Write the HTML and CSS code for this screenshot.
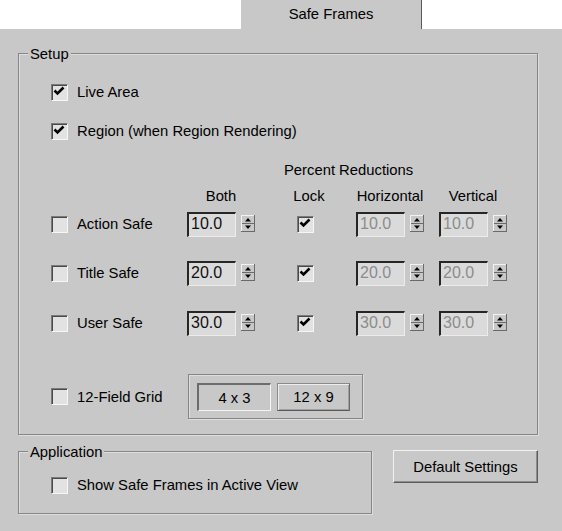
FILE: index.html
```html
<!DOCTYPE html>
<html>
<head>
<meta charset="utf-8">
<title>Safe Frames</title>
<link rel="stylesheet" href="styles.css">
</head>
<body>
<div class="tabbar">
  <div class="tab">Safe Frames</div>
</div>
<div class="panel">
  <div class="group setup">
    <span class="group-title">Setup</span>

    <div class="check row-live">
      <span class="box"><svg viewBox="0 0 17 17" width="17" height="17"><path d="M3.5 7.5 L6.5 10.5 L12.5 4.5" fill="none" stroke="#000" stroke-width="2.6"/></svg></span>
      <span>Live Area</span>
    </div>
    <div class="check row-region">
      <span class="box"><svg viewBox="0 0 17 17" width="17" height="17"><path d="M3.5 7.5 L6.5 10.5 L12.5 4.5" fill="none" stroke="#000" stroke-width="2.6"/></svg></span>
      <span>Region (when Region Rendering)</span>
    </div>

    <div class="pct">Percent Reductions</div>

    <div class="trow heads">
      <span></span>
      <span class="head">Both</span>
      <span class="head head-lock">Lock</span>
      <span class="head">Horizontal</span>
      <span class="head">Vertical</span>
    </div>

    <div class="trow data first">
      <div class="check"><span class="box"></span><span>Action Safe</span></div>
      <div class="spin"><span class="edit">10.0</span><svg class="arrows" viewBox="0 0 14 17" width="14" height="17"><rect x="0" y="0" width="14" height="17" fill="#c8c8c8"/><path d="M0 0.5 H13.5 M0.5 0 V17" stroke="#f2f2f2"/><path d="M13.5 0 V17 M0 16.5 H14" stroke="#6a6a6a"/><path d="M1 8.5 H13" stroke="#6a6a6a"/><path d="M4 6.5 H10 L7 3 Z" fill="#000"/><path d="M4 10.5 H10 L7 14 Z" fill="#000"/></svg></div>
      <span class="box lock"><svg viewBox="0 0 17 17" width="17" height="17"><path d="M3.5 7.5 L6.5 10.5 L12.5 4.5" fill="none" stroke="#000" stroke-width="2.6"/></svg></span>
      <div class="spin"><span class="edit disabled">10.0</span><svg class="arrows" viewBox="0 0 14 17" width="14" height="17"><rect x="0" y="0" width="14" height="17" fill="#c8c8c8"/><path d="M0 0.5 H13.5 M0.5 0 V17" stroke="#f2f2f2"/><path d="M13.5 0 V17 M0 16.5 H14" stroke="#6a6a6a"/><path d="M1 8.5 H13" stroke="#6a6a6a"/><path d="M4 6.5 H10 L7 3 Z" fill="#000"/><path d="M4 10.5 H10 L7 14 Z" fill="#000"/></svg></div>
      <div class="spin"><span class="edit disabled">10.0</span><svg class="arrows" viewBox="0 0 14 17" width="14" height="17"><rect x="0" y="0" width="14" height="17" fill="#c8c8c8"/><path d="M0 0.5 H13.5 M0.5 0 V17" stroke="#f2f2f2"/><path d="M13.5 0 V17 M0 16.5 H14" stroke="#6a6a6a"/><path d="M1 8.5 H13" stroke="#6a6a6a"/><path d="M4 6.5 H10 L7 3 Z" fill="#000"/><path d="M4 10.5 H10 L7 14 Z" fill="#000"/></svg></div>
    </div>

    <div class="trow data second">
      <div class="check"><span class="box"></span><span>Title Safe</span></div>
      <div class="spin"><span class="edit">20.0</span><svg class="arrows" viewBox="0 0 14 17" width="14" height="17"><rect x="0" y="0" width="14" height="17" fill="#c8c8c8"/><path d="M0 0.5 H13.5 M0.5 0 V17" stroke="#f2f2f2"/><path d="M13.5 0 V17 M0 16.5 H14" stroke="#6a6a6a"/><path d="M1 8.5 H13" stroke="#6a6a6a"/><path d="M4 6.5 H10 L7 3 Z" fill="#000"/><path d="M4 10.5 H10 L7 14 Z" fill="#000"/></svg></div>
      <span class="box lock"><svg viewBox="0 0 17 17" width="17" height="17"><path d="M3.5 7.5 L6.5 10.5 L12.5 4.5" fill="none" stroke="#000" stroke-width="2.6"/></svg></span>
      <div class="spin"><span class="edit disabled">20.0</span><svg class="arrows" viewBox="0 0 14 17" width="14" height="17"><rect x="0" y="0" width="14" height="17" fill="#c8c8c8"/><path d="M0 0.5 H13.5 M0.5 0 V17" stroke="#f2f2f2"/><path d="M13.5 0 V17 M0 16.5 H14" stroke="#6a6a6a"/><path d="M1 8.5 H13" stroke="#6a6a6a"/><path d="M4 6.5 H10 L7 3 Z" fill="#000"/><path d="M4 10.5 H10 L7 14 Z" fill="#000"/></svg></div>
      <div class="spin"><span class="edit disabled">20.0</span><svg class="arrows" viewBox="0 0 14 17" width="14" height="17"><rect x="0" y="0" width="14" height="17" fill="#c8c8c8"/><path d="M0 0.5 H13.5 M0.5 0 V17" stroke="#f2f2f2"/><path d="M13.5 0 V17 M0 16.5 H14" stroke="#6a6a6a"/><path d="M1 8.5 H13" stroke="#6a6a6a"/><path d="M4 6.5 H10 L7 3 Z" fill="#000"/><path d="M4 10.5 H10 L7 14 Z" fill="#000"/></svg></div>
    </div>

    <div class="trow data third">
      <div class="check"><span class="box"></span><span>User Safe</span></div>
      <div class="spin"><span class="edit">30.0</span><svg class="arrows" viewBox="0 0 14 17" width="14" height="17"><rect x="0" y="0" width="14" height="17" fill="#c8c8c8"/><path d="M0 0.5 H13.5 M0.5 0 V17" stroke="#f2f2f2"/><path d="M13.5 0 V17 M0 16.5 H14" stroke="#6a6a6a"/><path d="M1 8.5 H13" stroke="#6a6a6a"/><path d="M4 6.5 H10 L7 3 Z" fill="#000"/><path d="M4 10.5 H10 L7 14 Z" fill="#000"/></svg></div>
      <span class="box lock"><svg viewBox="0 0 17 17" width="17" height="17"><path d="M3.5 7.5 L6.5 10.5 L12.5 4.5" fill="none" stroke="#000" stroke-width="2.6"/></svg></span>
      <div class="spin"><span class="edit disabled">30.0</span><svg class="arrows" viewBox="0 0 14 17" width="14" height="17"><rect x="0" y="0" width="14" height="17" fill="#c8c8c8"/><path d="M0 0.5 H13.5 M0.5 0 V17" stroke="#f2f2f2"/><path d="M13.5 0 V17 M0 16.5 H14" stroke="#6a6a6a"/><path d="M1 8.5 H13" stroke="#6a6a6a"/><path d="M4 6.5 H10 L7 3 Z" fill="#000"/><path d="M4 10.5 H10 L7 14 Z" fill="#000"/></svg></div>
      <div class="spin"><span class="edit disabled">30.0</span><svg class="arrows" viewBox="0 0 14 17" width="14" height="17"><rect x="0" y="0" width="14" height="17" fill="#c8c8c8"/><path d="M0 0.5 H13.5 M0.5 0 V17" stroke="#f2f2f2"/><path d="M13.5 0 V17 M0 16.5 H14" stroke="#6a6a6a"/><path d="M1 8.5 H13" stroke="#6a6a6a"/><path d="M4 6.5 H10 L7 3 Z" fill="#000"/><path d="M4 10.5 H10 L7 14 Z" fill="#000"/></svg></div>
    </div>

    <div class="grid-row">
      <div class="check grid-check"><span class="box"></span><span>12-Field Grid</span></div>
      <div class="seg">
        <button class="seg-btn pressed">4 x 3</button>
        <button class="seg-btn raised">12 x 9</button>
      </div>
    </div>
  </div>

  <div class="bottom">
    <div class="group app">
      <span class="group-title">Application</span>
      <div class="check"><span class="box"></span><span>Show Safe Frames in Active View</span></div>
    </div>
    <button class="btn-default">Default Settings</button>
  </div>
</div>
</body>
</html>
```

FILE: styles.css
```css
html, body {
  margin: 0;
  padding: 0;
}

body {
  width: 562px;
  height: 531px;
  overflow: hidden;
  background: #ffffff;
  font-family: "Liberation Sans", Arial, sans-serif;
  font-size: 14.8px;
  color: #000;
}

.tabbar {
  height: 29px;
  padding-left: 241px;
  display: flex;
  background: #ffffff;
}

.tab {
  width: 181px;
  height: 29px;
  box-sizing: border-box;
  background: #c8c8c8;
  border-right: 1px solid #5a5a5a;
  text-align: center;
  line-height: 28px;
}

.panel {
  height: 502px;
  box-sizing: border-box;
  background: #c8c8c8;
  padding: 24px 0 0 18px;
}

.group {
  position: relative;
  box-sizing: border-box;
  border: 1px solid #868686;
  box-shadow: inset 1px 1px 0 #dedede, 1px 1px 0 #dedede;
}

.group-title {
  position: absolute;
  top: -9px;
  left: 9px;
  padding: 0 2px;
  line-height: 18px;
  background: #c8c8c8;
}

.setup {
  width: 520px;
  height: 382px;
  padding: 0 0 0 32px;
}

.check {
  display: flex;
  align-items: center;
  gap: 9px;
  height: 26px;
  white-space: nowrap;
}

.box {
  width: 17px;
  height: 17px;
  flex: none;
  box-sizing: border-box;
  border-style: solid;
  border-width: 1px;
  border-color: #7a7a7a #f6f6f6 #f6f6f6 #7a7a7a;
  box-shadow: inset 1px 1px 0 #4a4a4a;
  background: #e2e2e2;
  display: flex;
  align-items: center;
  justify-content: center;
  overflow: hidden;
}

.box svg {
  display: block;
  flex: none;
  margin: -1px 0 0 -1px;
}

.row-live {
  margin-top: 25px;
}

.row-region {
  margin-top: 13px;
}

.pct {
  margin-top: 17px;
  margin-left: 233px;
  line-height: 18px;
  height: 18px;
}

.trow {
  display: grid;
  grid-template-columns: 136px 68px 101px 83px 68px;
  align-items: center;
}

.heads {
  margin-top: 8px;
  height: 18px;
  line-height: 18px;
}

.head {
  width: 68px;
  text-align: center;
}

.head-lock {
  width: 101px;
  padding-left: 7px;
  box-sizing: border-box;
}

.data {
  height: 26px;
}

.first {
  margin-top: 6px;
}

.second {
  margin-top: 23px;
}

.third {
  margin-top: 24px;
}

.lock {
  justify-self: center;
}

.spin {
  display: flex;
  align-items: center;
  gap: 5px;
  width: 68px;
}

.edit {
  width: 49px;
  height: 25px;
  box-sizing: border-box;
  border-style: solid;
  border-width: 2px 1px 1px 2px;
  border-color: #262626 #ececec #ececec #262626;
  background: #dadada;
  font-size: 16px;
  line-height: 19px;
  padding-left: 2px;
  color: #111;
}

.edit.disabled {
  color: #8c8c8c;
}

.arrows {
  display: block;
  flex: none;
  margin-top: -2px;
}

.grid-row {
  display: flex;
  align-items: center;
  margin-top: 38px;
  height: 45px;
}

.grid-check {
  width: 137px;
}

.seg {
  width: 175px;
  height: 45px;
  box-sizing: border-box;
  border: 1px solid #868686;
  box-shadow: inset 1px 1px 0 #dedede, 1px 1px 0 #dedede;
  padding: 8px 12px 7px 8px;
  display: flex;
  gap: 6px;
}

.seg-btn {
  height: 28px;
  margin: 0;
  padding: 0;
  font-family: inherit;
  font-size: 14.8px;
  color: #000;
  background: #c8c8c8;
  box-sizing: border-box;
}

.pressed {
  width: 74px;
  border-style: solid;
  border-width: 2px 1px 1px 2px;
  border-color: #6c6c6c #f4f4f4 #f4f4f4 #6c6c6c;
  padding-top: 1px;
}

.raised {
  width: 73px;
  border: 1px solid #8a8a8a;
  border-bottom-color: #5a5a5a;
  border-right-color: #6a6a6a;
  box-shadow: inset 1px 1px 0 #eeeeee, inset -1px -1px 0 #a0a0a0;
}

.bottom {
  display: flex;
  align-items: flex-start;
  margin-top: 16px;
}

.app {
  width: 354px;
  height: 63px;
  padding: 20px 0 0 32px;
}

.btn-default {
  width: 145px;
  height: 33px;
  margin: -1px 0 0 21px;
  padding: 0;
  box-sizing: border-box;
  font-family: inherit;
  font-size: 14.8px;
  color: #000;
  background: #c8c8c8;
  border-style: solid;
  border-width: 1px;
  border-color: #f2f2f2 #5c5c5c #5c5c5c #f2f2f2;
  box-shadow: inset -1px -1px 0 #8e8e8e;
}
```
